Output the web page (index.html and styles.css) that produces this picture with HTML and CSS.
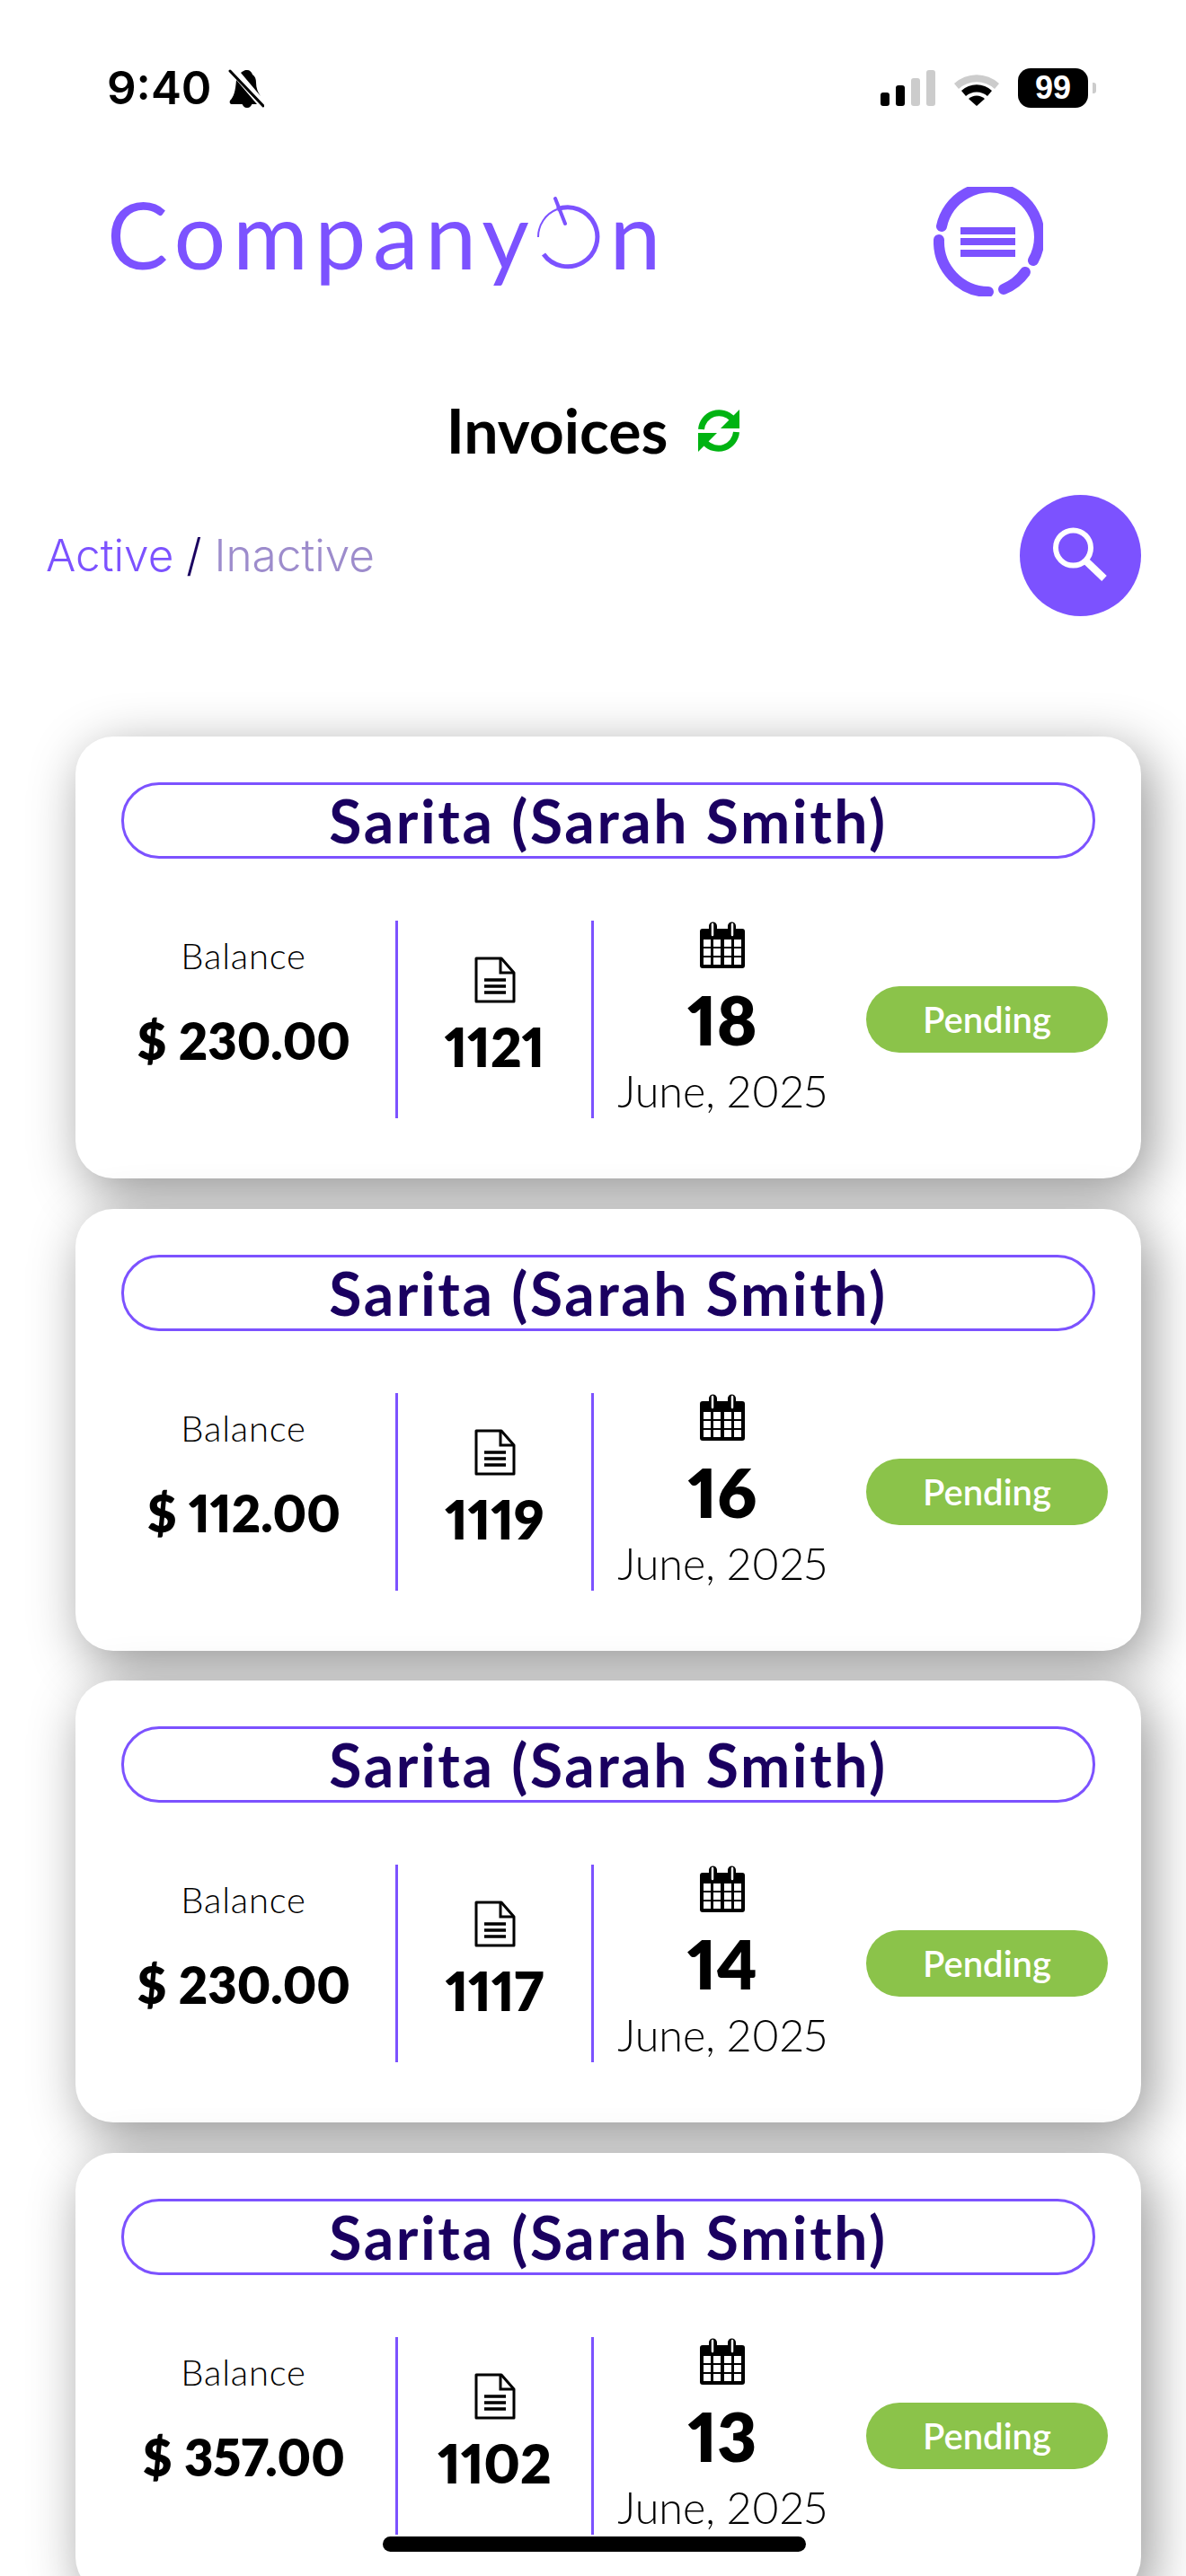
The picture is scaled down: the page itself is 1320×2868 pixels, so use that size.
FILE: index.html
```html
<!DOCTYPE html>
<html lang="en">
<head>
  <meta charset="UTF-8">
  <meta name="viewport" content="width=device-width, initial-scale=1.0">
  <title>Invoices</title>
  <link rel="stylesheet" href="styles.css">
</head>
<body>
  <div class="screen">
    <!-- Status bar -->
    <div class="status-bar">
      <div class="status-left">
        <span class="time">9:40</span>
        <svg class="bell" viewBox="0 0 40 44">
          <path d="M21 2c3 0 5 2 6 5 3 2 4 5 4 9 0 6 2 11 5 15l-22-26c2-1 3-3 7-3zM9 13l23 27H4c-2 0-3-2-2-4 4-4 6-10 7-23zM15 38h12c-1 4-3 6-6 6s-5-2-6-6z" fill="#000"/>
          <path d="M2 3l37 39" stroke="#000" stroke-width="3" stroke-linecap="round"/>
        </svg>
      </div>
      <div class="status-right">
        <div class="signal">
          <span class="bar bar1"></span>
          <span class="bar bar2"></span>
          <span class="bar bar3"></span>
          <span class="bar bar4"></span>
        </div>
        <svg class="wifi" viewBox="0 0 54 40">
          <path d="M2 15a37 37 0 0 1 50 0l-5 6a30 30 0 0 0-40 0z" fill="#ccc"/>
          <path d="M10 23a25 25 0 0 1 34 0l-5 6a18 18 0 0 0-24 0z" fill="#000"/>
          <path d="M18 32a13 13 0 0 1 18 0l-9 8z" fill="#000"/>
        </svg>
        <div class="battery">99</div>
        <span class="battery-nub"></span>
      </div>
    </div>

    <!-- Logo + menu -->
    <div class="top-bar">
      <div class="logo">
        <span class="logo-text">Company</span>
        <svg class="logo-o" viewBox="0 0 74 84">
          <path d="M9 64A33 33 0 1 0 24 14" fill="none" stroke="#7c52ff" stroke-width="5"/>
          <path d="M24 14A33 33 0 0 0 3 45" fill="none" stroke="#7c52ff" stroke-width="2"/>
          <path d="M22 2l11 28" stroke="#7c52ff" stroke-width="4" stroke-linecap="round"/>
        </svg>
        <span class="logo-text">n</span>
      </div>
      <svg class="menu-icon" viewBox="0 0 122 122">
        <g fill="none" stroke="#7c52ff" stroke-width="12" stroke-linecap="round">
          <path d="M9 44A55 55 0 1 1 111 82"/>
          <path d="M102 95A55 55 0 0 1 78 114"/>
          <path d="M61 117A56 56 0 0 1 6 59"/>
        </g>
        <rect x="30" y="45" width="61" height="8" fill="#7c52ff"/>
        <rect x="30" y="57" width="61" height="8" fill="#7c52ff"/>
        <rect x="30" y="70" width="61" height="8" fill="#7c52ff"/>
      </svg>
    </div>

    <div class="page-title">
      <h1>Invoices</h1>
      <svg class="sync" viewBox="0 0 46 47">
        <g fill="none" stroke="#00b312" stroke-width="7">
          <path d="M3.500 22A20 20 0 0 1 38 10"/>
          <path d="M42.500 25A20 20 0 0 1 8 37"/>
        </g>
        <path d="M46 0v21H25zM0 47V26h21z" fill="#00b312"/>
      </svg>
    </div>

    <div class="filter-row">
      <div class="filter">
        <span class="active">Active</span> <span class="sep">/</span> <span class="inactive">Inactive</span>
      </div>
      <div class="search-btn">
        <svg viewBox="0 0 62 62">
          <circle cx="22.500" cy="23" r="19.500" fill="none" stroke="#fff" stroke-width="6"/>
          <path d="M35 36l22 21" stroke="#fff" stroke-width="8"/>
        </svg>
      </div>
    </div>

    <!-- Invoice list -->
    <div class="invoice-list">
      <div class="card">
        <div class="client">Sarita (Sarah Smith)</div>
        <div class="card-row">
          <div class="col-balance">
            <div class="label">Balance</div>
            <div class="amount">$ 230.00</div>
          </div>
          <div class="col-number">
            <svg class="doc-icon" viewBox="0 0 46 52"><use href="#doc"/></svg>
            <div class="number">1121</div>
          </div>
          <div class="col-date">
            <svg class="cal-icon" viewBox="0 0 50 52"><use href="#cal"/></svg>
            <div class="day">18</div>
            <div class="month">June, 2025</div>
          </div>
          <div class="status">Pending</div>
        </div>
      </div>

      <div class="card">
        <div class="client">Sarita (Sarah Smith)</div>
        <div class="card-row">
          <div class="col-balance">
            <div class="label">Balance</div>
            <div class="amount">$ 112.00</div>
          </div>
          <div class="col-number">
            <svg class="doc-icon" viewBox="0 0 46 52"><use href="#doc"/></svg>
            <div class="number">1119</div>
          </div>
          <div class="col-date">
            <svg class="cal-icon" viewBox="0 0 50 52"><use href="#cal"/></svg>
            <div class="day">16</div>
            <div class="month">June, 2025</div>
          </div>
          <div class="status">Pending</div>
        </div>
      </div>

      <div class="card">
        <div class="client">Sarita (Sarah Smith)</div>
        <div class="card-row">
          <div class="col-balance">
            <div class="label">Balance</div>
            <div class="amount">$ 230.00</div>
          </div>
          <div class="col-number">
            <svg class="doc-icon" viewBox="0 0 46 52"><use href="#doc"/></svg>
            <div class="number">1117</div>
          </div>
          <div class="col-date">
            <svg class="cal-icon" viewBox="0 0 50 52"><use href="#cal"/></svg>
            <div class="day">14</div>
            <div class="month">June, 2025</div>
          </div>
          <div class="status">Pending</div>
        </div>
      </div>

      <div class="card">
        <div class="client">Sarita (Sarah Smith)</div>
        <div class="card-row">
          <div class="col-balance">
            <div class="label">Balance</div>
            <div class="amount">$ 357.00</div>
          </div>
          <div class="col-number">
            <svg class="doc-icon" viewBox="0 0 46 52"><use href="#doc"/></svg>
            <div class="number">1102</div>
          </div>
          <div class="col-date">
            <svg class="cal-icon" viewBox="0 0 50 52"><use href="#cal"/></svg>
            <div class="day">13</div>
            <div class="month">June, 2025</div>
          </div>
          <div class="status">Pending</div>
        </div>
      </div>
    </div>

    <div class="home-indicator"></div>
  </div>

  <!-- Shared icons -->
  <svg class="icon-defs">
    <symbol id="doc" viewBox="0 0 46 52">
      <path d="M2 2h28l14 16v32H2z" fill="#fff" stroke="#000" stroke-width="3" stroke-linejoin="round"/>
      <path d="M29 2v16h15" fill="none" stroke="#000" stroke-width="3"/>
      <path d="M11 26h24M11 33h24M11 40h24" stroke="#000" stroke-width="3.500"/>
    </symbol>
    <symbol id="cal" viewBox="0 0 50 52">
      <path d="M3 8h7V5a4 4 0 0 1 9 0v3h12V5a4 4 0 0 1 9 0v3h7a3 3 0 0 1 3 3v38a3 3 0 0 1-3 3H3a3 3 0 0 1-3-3V11a3 3 0 0 1 3-3z" fill="#000"/>
      <path d="M14 3v12M36 3v12" stroke="#fff" stroke-width="2.500" stroke-linecap="round"/>
      <g fill="#fff">
        <rect x="4" y="20" width="8" height="8"/><rect x="15" y="20" width="8" height="8"/><rect x="27" y="20" width="8" height="8"/><rect x="38" y="20" width="8" height="8"/>
        <rect x="4" y="30" width="8" height="8"/><rect x="15" y="30" width="8" height="8"/><rect x="27" y="30" width="8" height="8"/><rect x="38" y="30" width="8" height="8"/>
        <rect x="4" y="40" width="8" height="8"/><rect x="15" y="40" width="8" height="8"/><rect x="27" y="40" width="8" height="8"/><rect x="38" y="40" width="8" height="8"/>
      </g>
    </symbol>
  </svg>
</body>
</html>
```

FILE: styles.css
```css
html, body {
  margin: 0;
  padding: 0;
  height: 100%;
  overflow: hidden;
  background: #ffffff;
}

body {
  font-family: 'Lato', 'Open Sans', sans-serif;
  color: #000;
  font-variant-numeric: proportional-nums;
}

.screen {
  position: relative;
  width: 1320px;
  height: 2868px;
  overflow: hidden;
}

.icon-defs {
  display: none;
}

/* Status bar */
.status-bar {
  height: 120px;
  padding: 76px 100px 0 119px;
  box-sizing: border-box;
  display: flex;
  justify-content: space-between;
  align-items: flex-start;
}

.status-left {
  display: flex;
  align-items: center;
  gap: 18px;
  height: 44px;
}

.time {
  font-family: 'Inter', sans-serif;
  font-weight: 600;
  font-size: 51px;
  line-height: 44px;
}

.bell {
  width: 40px;
  height: 44px;
}

.status-right {
  display: flex;
  align-items: center;
  height: 44px;
}

.signal {
  display: flex;
  align-items: flex-end;
  gap: 7px;
  height: 40px;
  margin-right: 19px;
}

.bar {
  width: 10px;
  border-radius: 3px;
  background: #000;
}

.bar1 { height: 15px; }
.bar2 { height: 23px; }
.bar3 { height: 31px; background: #ccc; }
.bar4 { height: 40px; background: #ccc; }

.wifi {
  width: 54px;
  height: 40px;
  margin-right: 19px;
}

.battery {
  width: 78px;
  height: 44px;
  border-radius: 14px;
  background: #000;
  color: #fff;
  font-family: 'Liberation Sans', sans-serif;
  font-weight: 700;
  font-size: 36px;
  line-height: 44px;
  text-align: center;
}

.battery-nub {
  width: 4px;
  height: 12px;
  margin-left: 5px;
  border-radius: 0 3px 3px 0;
  background: #ccc;
}

/* Logo row */
.top-bar {
  height: 148px;
  padding: 0 159px 0 119px;
  margin-top: 88px;
  display: flex;
  justify-content: space-between;
  align-items: flex-start;
}

.logo {
  display: flex;
  align-items: baseline;
  color: #7c52ff;
  line-height: 110px;
  margin-top: -2px;
}

.logo-text {
  font-size: 102px;
  font-weight: 400;
  letter-spacing: 7.500px;
}

.logo-o {
  width: 74px;
  height: 84px;
  margin: 0 8px 13px 0;
  align-self: flex-end;
}

.menu-icon {
  width: 122px;
  height: 122px;
}

/* Title */
.page-title {
  display: flex;
  justify-content: center;
  align-items: center;
  gap: 34px;
  margin-top: 93px;
  height: 60px;
}

.page-title h1 {
  margin: 0;
  font-size: 68px;
  font-weight: 700;
  line-height: 60px;
}

.sync {
  width: 46px;
  height: 47px;
}

/* Filter */
.filter-row {
  display: flex;
  justify-content: space-between;
  align-items: center;
  padding: 0 50px 0 51px;
  margin-top: 41px;
  height: 136px;
}

.filter {
  font-family: 'Inter', sans-serif;
  font-size: 49.500px;
  font-weight: 300;
}

.active { color: #7c52ff; }
.sep { color: #1a0060; }
.inactive { color: #9d8ccc; }

.search-btn {
  width: 135px;
  height: 135px;
  border-radius: 50%;
  background: #7c52ff;
  display: flex;
  align-items: center;
  justify-content: center;
}

.search-btn svg {
  width: 62px;
  height: 62px;
}

/* Cards */
.invoice-list {
  display: flex;
  flex-direction: column;
  gap: 33.500px;
  padding: 134px 50px 0 84px;
}

.card {
  flex: none;
  height: 492px;
  box-sizing: border-box;
  padding: 51px 0 0;
  background: #fff;
  border-radius: 42px;
  box-shadow: 10px 16px 60px rgba(0, 0, 0, 0.42);
}

.client {
  height: 85px;
  box-sizing: border-box;
  margin: 0 51px;
  border: 3px solid #7c52ff;
  border-radius: 42px;
  color: #1a0060;
  font-size: 66px;
  font-weight: 700;
  letter-spacing: 2.600px;
  line-height: 79px;
  text-align: center;
}

.card-row {
  display: flex;
  align-items: stretch;
  height: 220px;
  margin-top: 69px;
}

.col-balance {
  width: 338px;
  margin-left: 18px;
  border-right: 3px solid #7c52ff;
  display: flex;
  flex-direction: column;
  align-items: center;
  text-align: center;
}

.label {
  margin-top: 17px;
  font-size: 40px;
  font-weight: 300;
  letter-spacing: 0.800px;
  line-height: 44px;
}

.amount {
  margin-top: 38px;
  font-size: 56px;
  font-weight: 800;
  line-height: 70px;
}

.col-number {
  width: 215px;
  border-right: 3px solid #7c52ff;
  display: flex;
  flex-direction: column;
  align-items: center;
}

.doc-icon {
  width: 46px;
  height: 52px;
  margin-top: 40px;
}

.number {
  margin-top: 12px;
  font-size: 60px;
  font-weight: 800;
  line-height: 72px;
}

.col-date {
  width: 286px;
  display: flex;
  flex-direction: column;
  align-items: center;
}

.cal-icon {
  width: 50px;
  height: 52px;
  margin-top: 1px;
}

.day {
  margin-top: 12px;
  font-size: 76px;
  font-weight: 800;
  line-height: 90px;
}

.month {
  margin-top: 6px;
  font-size: 48.500px;
  font-weight: 300;
  line-height: 56px;
}

.status {
  align-self: center;
  width: 269px;
  height: 74px;
  margin-left: 17px;
  border-radius: 37px;
  background: #8bc34a;
  color: #fff;
  font-size: 40px;
  font-weight: 600;
  line-height: 74px;
  text-align: center;
}

.home-indicator {
  position: absolute;
  left: 426px;
  bottom: 27px;
  width: 471px;
  height: 17px;
  border-radius: 9px;
  background: #000;
}
```
